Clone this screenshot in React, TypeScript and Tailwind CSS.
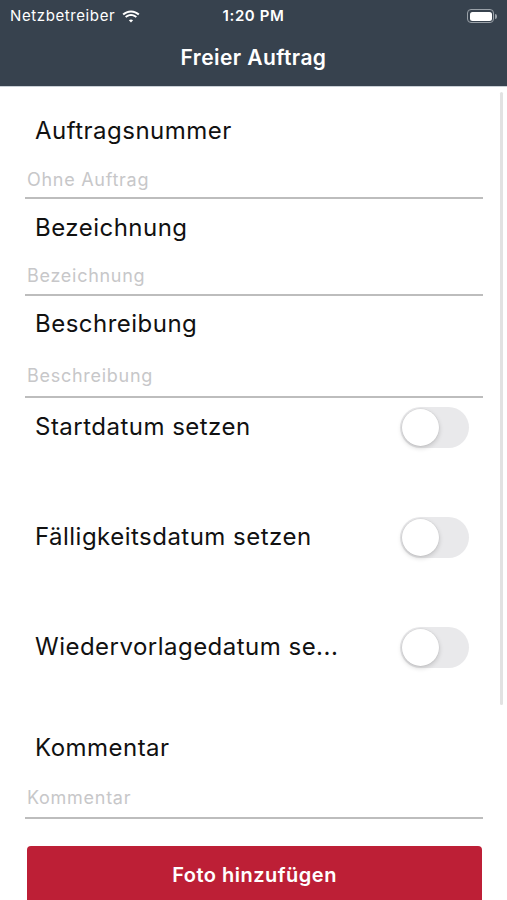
import React from "react";

const font = { fontFamily: "Inter, 'Noto Sans', sans-serif" };

function Toggle() {
  return (
    <div className="w-[69px] h-[41px] rounded-full bg-[#e9e9eb] p-[2px] flex items-center">
      <div className="w-[37px] h-[37px] rounded-full bg-white shadow-[0_2px_5px_rgba(0,0,0,0.18),0_0_0_0.5px_rgba(0,0,0,0.06)]" />
    </div>
  );
}

function Field({ label, placeholder, pt, gap, pb }: { label: string; placeholder: string; pt: string; gap: string; pb: string }) {
  return (
    <div className={`flex flex-col border-b-2 border-[#bdbdbd] ${pt} ${pb}`}>
      <div className="pl-[10px] text-[24px] leading-[26px] tracking-[0.02em] text-[#111]">{label}</div>
      <div className={`pl-[2px] text-[18px] leading-[22px] tracking-[0.04em] text-[#c7c7c9] ${gap}`}>{placeholder}</div>
    </div>
  );
}

function ToggleRow({ label }: { label: string }) {
  return (
    <div className="h-[58px] flex items-center justify-between pl-[10px] pr-[14px]">
      <span className="text-[24px] tracking-[0.02em] text-[#111]">{label}</span>
      <Toggle />
    </div>
  );
}

export default function App() {
  return (
    <div className="relative w-[507px] h-[900px] overflow-hidden bg-white" style={font}>
      <header className="bg-[#37424e] text-white border-b border-[#c9d0d6]">
        <div className="h-[32px] flex items-center justify-between px-[10px] relative">
          <div className="flex items-center gap-[6px] text-[15px] tracking-[0.04em]">
            <span>Netzbetreiber</span>
            <svg width="20" height="15" viewBox="0 0 19 14" fill="white">
              <path d="M9.5 3.2c2.6 0 5 1 6.8 2.7l1.3-1.4C15.5 2.4 12.6 1.2 9.5 1.2S3.5 2.4 1.4 4.5l1.3 1.4C4.5 4.2 6.9 3.2 9.5 3.2z" />
              <path d="M9.5 6.6c1.7 0 3.2.6 4.4 1.7l1.3-1.4c-1.5-1.4-3.5-2.3-5.7-2.3S5.3 5.5 3.8 6.9l1.3 1.4c1.2-1.1 2.7-1.7 4.4-1.7z" />
              <path d="M9.5 9.8c.8 0 1.5.3 2 .8l-2 2.2-2-2.2c.5-.5 1.2-.8 2-.8z" />
            </svg>
          </div>
          <span className="absolute left-1/2 -translate-x-1/2 text-[15px] tracking-[0.04em] font-semibold">1:20 PM</span>
          <div className="flex items-center">
            <div className="w-[27px] h-[14px] rounded-[4px] border border-[#9aa1a8] p-[1.5px]">
              <div className="w-full h-full rounded-[2.5px] bg-white" />
            </div>
            <div className="w-[2px] h-[5px] bg-[#9aa1a8] rounded-r-sm ml-[1px]" />
          </div>
        </div>
        <div className="h-[54px] flex items-center justify-center text-[21px] tracking-[0.02em] font-semibold pb-[2px]">Freier Auftrag</div>
      </header>

      <div className="px-[25px] flex flex-col" style={{ width: 508 }}>
        <Field label="Auftragsnummer" placeholder="Ohne Auftrag" pt="pt-[31px]" gap="mt-[25px]" pb="pb-[6px]" />
        <Field label="Bezeichnung" placeholder="Bezeichnung" pt="pt-[16px]" gap="mt-[24px]" pb="pb-[7px]" />
        <Field label="Beschreibung" placeholder="Beschreibung" pt="pt-[15px]" gap="mt-[28px]" pb="pb-[9px]" />
        <div className="flex flex-col gap-[52px]">
          <ToggleRow label="Startdatum setzen" />
          <ToggleRow label="Fälligkeitsdatum setzen" />
          <ToggleRow label="Wiedervorlagedatum se..." />
        </div>
        <Field label="Kommentar" placeholder="Kommentar" pt="pt-[59px]" gap="mt-[26px]" pb="pb-[8px]" />
        <button className="mt-[27px] h-[58px] w-[455px] ml-[2px] rounded-[4px] bg-[#bd1f36] text-white text-[20px] tracking-[0.025em] font-semibold">
          Foto hinzufügen
        </button>
      </div>

      <div className="absolute right-[4px] top-[92px] w-[3px] h-[613px] rounded-full bg-[#e2e2e2]" />
    </div>
  );
}
